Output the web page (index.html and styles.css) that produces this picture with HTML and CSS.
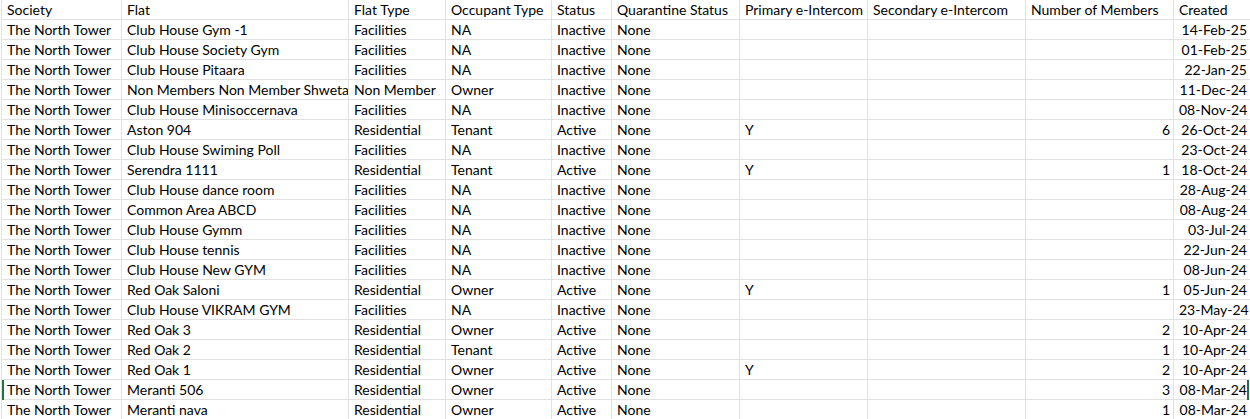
FILE: index.html
```html
<!DOCTYPE html>
<html>
<head>
<meta charset="utf-8">
<link rel="stylesheet" href="styles.css">
</head>
<body>
<div class="sheet">
  <div class="row">
    <div class="c">Society</div><div class="c">Flat</div><div class="c">Flat Type</div><div class="c">Occupant Type</div><div class="c">Status</div><div class="c">Quarantine Status</div><div class="c">Primary e-Intercom</div><div class="c">Secondary e-Intercom</div><div class="c">Number of Members</div><div class="c">Created</div>
  </div>
  <div class="row"><div class="c">The North Tower</div><div class="c">Club House Gym -1</div><div class="c">Facilities</div><div class="c">NA</div><div class="c">Inactive</div><div class="c">None</div><div class="c"></div><div class="c"></div><div class="c r"></div><div class="c r">14-Feb-25</div></div>
  <div class="row"><div class="c">The North Tower</div><div class="c">Club House Society Gym</div><div class="c">Facilities</div><div class="c">NA</div><div class="c">Inactive</div><div class="c">None</div><div class="c"></div><div class="c"></div><div class="c r"></div><div class="c r">01-Feb-25</div></div>
  <div class="row"><div class="c">The North Tower</div><div class="c">Club House Pitaara</div><div class="c">Facilities</div><div class="c">NA</div><div class="c">Inactive</div><div class="c">None</div><div class="c"></div><div class="c"></div><div class="c r"></div><div class="c r">22-Jan-25</div></div>
  <div class="row"><div class="c">The North Tower</div><div class="c">Non Members Non Member Shweta</div><div class="c">Non Member</div><div class="c">Owner</div><div class="c">Inactive</div><div class="c">None</div><div class="c"></div><div class="c"></div><div class="c r"></div><div class="c r">11-Dec-24</div></div>
  <div class="row"><div class="c">The North Tower</div><div class="c">Club House Minisoccernava</div><div class="c">Facilities</div><div class="c">NA</div><div class="c">Inactive</div><div class="c">None</div><div class="c"></div><div class="c"></div><div class="c r"></div><div class="c r">08-Nov-24</div></div>
  <div class="row"><div class="c">The North Tower</div><div class="c">Aston 904</div><div class="c">Residential</div><div class="c">Tenant</div><div class="c">Active</div><div class="c">None</div><div class="c">Y</div><div class="c"></div><div class="c r">6</div><div class="c r">26-Oct-24</div></div>
  <div class="row"><div class="c">The North Tower</div><div class="c">Club House Swiming Poll</div><div class="c">Facilities</div><div class="c">NA</div><div class="c">Inactive</div><div class="c">None</div><div class="c"></div><div class="c"></div><div class="c r"></div><div class="c r">23-Oct-24</div></div>
  <div class="row"><div class="c">The North Tower</div><div class="c">Serendra 1111</div><div class="c">Residential</div><div class="c">Tenant</div><div class="c">Active</div><div class="c">None</div><div class="c">Y</div><div class="c"></div><div class="c r">1</div><div class="c r">18-Oct-24</div></div>
  <div class="row"><div class="c">The North Tower</div><div class="c">Club House dance room</div><div class="c">Facilities</div><div class="c">NA</div><div class="c">Inactive</div><div class="c">None</div><div class="c"></div><div class="c"></div><div class="c r"></div><div class="c r">28-Aug-24</div></div>
  <div class="row"><div class="c">The North Tower</div><div class="c">Common Area ABCD</div><div class="c">Facilities</div><div class="c">NA</div><div class="c">Inactive</div><div class="c">None</div><div class="c"></div><div class="c"></div><div class="c r"></div><div class="c r">08-Aug-24</div></div>
  <div class="row"><div class="c">The North Tower</div><div class="c">Club House Gymm</div><div class="c">Facilities</div><div class="c">NA</div><div class="c">Inactive</div><div class="c">None</div><div class="c"></div><div class="c"></div><div class="c r"></div><div class="c r">03-Jul-24</div></div>
  <div class="row"><div class="c">The North Tower</div><div class="c">Club House tennis</div><div class="c">Facilities</div><div class="c">NA</div><div class="c">Inactive</div><div class="c">None</div><div class="c"></div><div class="c"></div><div class="c r"></div><div class="c r">22-Jun-24</div></div>
  <div class="row"><div class="c">The North Tower</div><div class="c">Club House New GYM</div><div class="c">Facilities</div><div class="c">NA</div><div class="c">Inactive</div><div class="c">None</div><div class="c"></div><div class="c"></div><div class="c r"></div><div class="c r">08-Jun-24</div></div>
  <div class="row"><div class="c">The North Tower</div><div class="c">Red Oak Saloni</div><div class="c">Residential</div><div class="c">Owner</div><div class="c">Active</div><div class="c">None</div><div class="c">Y</div><div class="c"></div><div class="c r">1</div><div class="c r">05-Jun-24</div></div>
  <div class="row"><div class="c">The North Tower</div><div class="c">Club House VIKRAM GYM</div><div class="c">Facilities</div><div class="c">NA</div><div class="c">Inactive</div><div class="c">None</div><div class="c"></div><div class="c"></div><div class="c r"></div><div class="c r">23-May-24</div></div>
  <div class="row"><div class="c">The North Tower</div><div class="c">Red Oak 3</div><div class="c">Residential</div><div class="c">Owner</div><div class="c">Active</div><div class="c">None</div><div class="c"></div><div class="c"></div><div class="c r">2</div><div class="c r">10-Apr-24</div></div>
  <div class="row"><div class="c">The North Tower</div><div class="c">Red Oak 2</div><div class="c">Residential</div><div class="c">Tenant</div><div class="c">Active</div><div class="c">None</div><div class="c"></div><div class="c"></div><div class="c r">1</div><div class="c r">10-Apr-24</div></div>
  <div class="row"><div class="c">The North Tower</div><div class="c">Red Oak 1</div><div class="c">Residential</div><div class="c">Owner</div><div class="c">Active</div><div class="c">None</div><div class="c">Y</div><div class="c"></div><div class="c r">2</div><div class="c r">10-Apr-24</div></div>
  <div class="row active"><div class="c">The North Tower</div><div class="c">Meranti 506</div><div class="c">Residential</div><div class="c">Owner</div><div class="c">Active</div><div class="c">None</div><div class="c"></div><div class="c"></div><div class="c r">3</div><div class="c r">08-Mar-24</div></div>
  <div class="row"><div class="c">The North Tower</div><div class="c">Meranti nava</div><div class="c">Residential</div><div class="c">Owner</div><div class="c">Active</div><div class="c">None</div><div class="c"></div><div class="c"></div><div class="c r">1</div><div class="c r">08-Mar-24</div></div>
</div>
</body>
</html>
```

FILE: styles.css
```css
html, body {
  margin: 0;
  padding: 0;
  background: #ffffff;
}
.sheet {
  width: 1250px;
  font-family: "Lato", "Liberation Sans", sans-serif;
  font-size: 14px;
  color: #000000;
  padding-left: 1px;
  box-sizing: border-box;
}
.row {
  display: grid;
  grid-template-columns: 120px 227px 97px 106px 60px 128px 128px 158px 148px 77px;
  height: 20px;
  border-bottom: 1px solid #e1e1e1;
  box-sizing: border-box;
  position: relative;
}
.c {
  border-left: 1px solid #e1e1e1;
  padding: 0 3px 0 5px;
  line-height: 19px;
  white-space: nowrap;
  overflow: hidden;
}
.c.r {
  text-align: right;
}
.row.active::before,
.row.active::after {
  content: "";
  position: absolute;
  top: 0;
  width: 2px;
  height: 20px;
  background: #217346;
}
.row.active::before { left: 1px; }
.row.active::after { right: 1px; }
```
